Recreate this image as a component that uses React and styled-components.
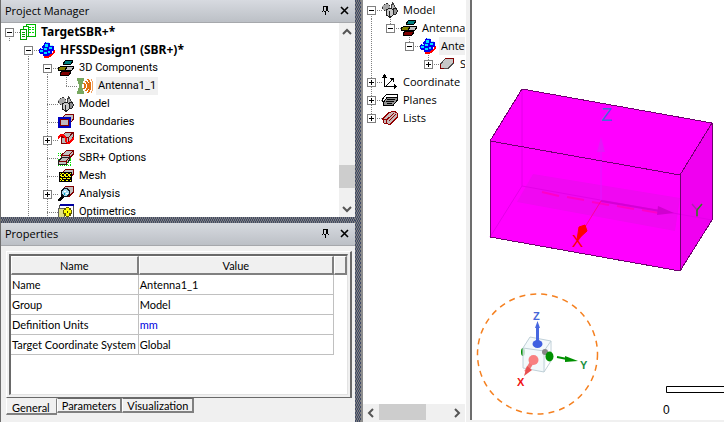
import React from 'react';
import styled, { createGlobalStyle } from 'styled-components';

const GlobalStyle = createGlobalStyle`
  * {
    box-sizing: border-box;
  }

  body {
    margin: 0;
    background: #f0f0f0;
    color: #000;
    font-family: "Open Sans", sans-serif;
    font-size: 11px;
  }

  button {
    font: inherit;
    color: inherit;
    border: 0;
    padding: 0;
    background: none;
  }
`;

const Workspace = styled.div`
  display: grid;
  grid-template-columns: minmax(0, 355fr) 8px minmax(0, 103fr) 4px minmax(0, 254fr);
  grid-template-rows: minmax(0, 1fr);
  height: 100vh;
  overflow: hidden;
`;

const LeftColumn = styled.div`
  display: grid;
  grid-template-rows: minmax(0, 217fr) 6px minmax(0, 199fr);
  border-left: 1px solid #6d6d6d;
  min-width: 0;
`;

const Splitter = styled.div`
  background: conic-gradient(#808080 25%, #404a66 0 50%, #808080 0 75%, #404a66 0) 0 0 / 2px 4px;
  border-right: ${(p) => (p.$vertical ? '2px solid #8e8e8e' : '0')};
`;

const Panel = styled.section`
  display: flex;
  flex-direction: column;
  min-height: 0;
  min-width: 0;
`;

const TitleBar = styled.header`
  display: flex;
  align-items: center;
  flex: none;
  height: 23px;
  padding: 0 5px 1px 4px;
  background: linear-gradient(#d7dae0, #bcc0c6);
  border-bottom: 1px solid #a6a8ac;
`;

const PanelTitle = styled.h2`
  flex: 1;
  margin: 0;
  font-size: 11px;
  font-weight: 400;
`;

const TitleButton = styled.button`
  display: flex;
  width: 11px;
  height: 11px;
  margin-left: 8px;
`;

const TreeArea = styled.div`
  display: flex;
  flex: 1;
  min-height: 0;
  background: #fff;
`;

const Tree = styled.ul`
  flex: 1;
  min-width: 0;
  min-height: 0;
  margin: 0;
  padding: ${(p) => (p.$inset ? '1px 0 0' : '0')};
  list-style: none;
  overflow: hidden;
  background: #fff;
  font-family: ${(p) => (p.$inset ? '"Open Sans"' : 'Roboto')}, sans-serif;
`;

const TreeRow = styled.li`
  display: flex;
  align-items: center;
  height: 18px;
  white-space: nowrap;
`;

const dotsDown = 'repeating-linear-gradient(#808080 0 1px, transparent 1px 2px)';
const dotsAcross = 'repeating-linear-gradient(90deg, #808080 0 1px, transparent 1px 2px)';

const guides = {
  none: 'none',
  line: `${dotsDown} 8px 0 / 1px 100% no-repeat`,
  tee: `${dotsDown} 8px 0 / 1px 100% no-repeat, ${dotsAcross} 8px 9px / 11px 1px no-repeat`,
  end: `${dotsDown} 8px 0 / 1px 9px no-repeat, ${dotsAcross} 8px 9px / 11px 1px no-repeat`,
  start: `${dotsDown} 8px 9px / 1px 9px no-repeat, ${dotsAcross} 8px 9px / 11px 1px no-repeat`,
};

const Guide = styled.span`
  flex: none;
  width: 19px;
  height: 18px;
  padding: 5px 0 0 4px;
  background: ${(p) => guides[p.$type]};
`;

const Expander = styled.button`
  display: block;
  width: 9px;
  height: 9px;
  border: 1px solid #808080;
  background:
    linear-gradient(#000, #000) 1px 3px / 5px 1px no-repeat,
    linear-gradient(#000, #000) 3px 1px / 1px ${(p) => (p.$open ? '0' : '5px')} no-repeat,
    #fff;
`;

const Glyph = styled.svg`
  flex: none;
  display: block;
  width: 16px;
  height: 16px;
`;

const Label = styled.span`
  margin-left: 3px;
  padding: 0 2px 1px;
  line-height: 17px;
  font-family: ${(p) => (p.$bold ? '"Noto Sans", sans-serif' : 'inherit')};
  font-size: ${(p) => (p.$bold ? '12px' : '11px')};
  font-weight: ${(p) => (p.$bold ? 700 : 400)};
  background: ${(p) => (p.$selected ? '#f0f0f0' : 'transparent')};
`;

const Scrollbar = styled.div`
  display: flex;
  flex: none;
  flex-direction: ${(p) => (p.$horizontal ? 'row' : 'column')};
  width: ${(p) => (p.$horizontal ? 'auto' : '16px')};
  height: ${(p) => (p.$horizontal ? '16px' : 'auto')};
  background: #f0f0f0;
`;

const ScrollButton = styled.button`
  display: flex;
  align-items: center;
  justify-content: center;
  flex: none;
  width: 16px;
  height: 17px;
`;

const Track = styled.div`
  display: flex;
  flex: 1;
  flex-direction: inherit;
`;

const Thumb = styled.div`
  flex: ${(p) => p.$size};
  background: #cdcdcd;
`;

const Space = styled.div`
  flex: ${(p) => p.$size};
`;

const PropertiesBody = styled.div`
  display: flex;
  flex: 1;
  flex-direction: column;
  min-height: 0;
  padding: 5px 3px 7px 5px;
  background: #f0f0f0;
`;

const SheetFrame = styled.div`
  display: flex;
  flex: 1;
  min-height: 0;
  padding: 2px;
  border: 1px solid #fff;
  border-right: 2px solid #696969;
  border-bottom: 1px solid #696969;
`;

const Sheet = styled.div`
  flex: 1;
  min-width: 0;
  background: #fff;
  border: 2px solid #696969;
  border-right: 1px solid #e3e3e3;
  border-bottom: 1px solid #e3e3e3;
`;

const PropertyTable = styled.table`
  width: 100%;
  table-layout: fixed;
  border-collapse: separate;
  border-spacing: 0;
  font-family: Lato, sans-serif;
  font-size: 11px;
`;

const HeadCell = styled.th`
  width: ${(p) => p.$width};
  height: 19px;
  padding: 0;
  font-weight: 400;
  background: #f0f0f0;
  border: 1px solid #fff;
  border-right: 2px solid #808080;
  border-bottom: 2px solid #808080;
`;

const Cell = styled.td`
  height: 20px;
  padding: 0 0 0 1px;
  color: ${(p) => (p.$unit ? '#0000e0' : '#000')};
  white-space: nowrap;
  border-right: 1px solid #c0c0c0;
  border-bottom: 1px solid #c0c0c0;
`;

const Tabs = styled.div`
  display: flex;
  align-items: flex-start;
  font-family: Lato, sans-serif;
  font-size: 11px;
`;

const Tab = styled.button`
  height: ${(p) => (p.$active ? '17px' : '15px')};
  padding: ${(p) => (p.$active ? '2px 6px 0 5px' : '0 4px')};
  line-height: 13px;
  background: #f0f0f0;
  border: 1px solid #fff;
  border-top-color: ${(p) => (p.$active ? '#f0f0f0' : '#696969')};
  border-right: ${(p) => (p.$active ? '1px' : '2px')} solid #808080;
  border-bottom: 2px solid #808080;
`;

const ModelPanel = styled(Panel)`
  padding-bottom: 2px;
  border-right: 1px solid #fff;
`;

const Viewport = styled.main`
  min-width: 0;
  margin-bottom: 2px;
  background: #fff;
  border-left: 2px solid #6d6d6d;
  overflow: hidden;
`;

const Scene = styled.svg`
  display: block;
  width: 252px;
  height: 420px;
  font-family: "Liberation Sans", sans-serif;
`;

const drawings = {
  project: (
    <>
      <path d="M6.5 .5H15.5V12.5H6.5Z" fill="#fff" stroke="#00b400" />
      <path d="M9 3h2M12 3h2M9 5h2M12 5h2M9 8h2M12 8h2" stroke="#00e000" />
      <path d="M3.5 2.5H8.5V12.5H3.5Z" fill="#fff" stroke="#00b400" />
      <path d="M.5 5.5H6.5V15.5H.5Z" fill="#fff" stroke="#00a000" />
      <path d="M2 8.500h3M2 10.500h3M2 12.500h3" stroke="#00a000" />
    </>
  ),
  design: (
    <>
      <path d="M5 12h6v-1h3V8h2v3l-3 2-2 2-3 1H5z" fill="#f00" />
      <path d="M6 0h4v1h1v2h3v1h1v4l-1 1h-1v2l-1 1h-1l-1 1-1 1H4v-2H1l-1-1V7l1-1h2V4l2-1V1z" fill="#0000f0" />
      <path d="M6 2h3v3H6zM10 5h3v2h-3zM5 6h3v2H5zM1 8h3v2H1zM5 10h3v2H5zM9 9h2v2H9z" fill="#00e0ff" />
      <path d="M7 0h3v1H7zM11 3h3v1h-3zM2 6h2v1H2z" fill="#a0f0ff" />
    </>
  ),
  components: (
    <>
      <path d="M7.500 .5H14.500V2L12.500 4.500H5.500V3Z" fill="#008080" stroke="#000" />
      <path d="M7.500 6.500H15.500V8L13.500 10.500H7.500Z" fill="#c0c0c0" stroke="#000" />
      <path d="M2.500 6.500H8.500V8L6.500 10.500H.5V8Z" fill="#808000" stroke="#000" />
      <path d="M4 11.500H12.500V13L10.500 15.500H2.500V13Z" fill="#800000" stroke="#000" />
    </>
  ),
  antenna: (
    <>
      <path d="M0 0h7v2L5 7v2l2 5v2H0v-2l2-5V7L0 2z" fill="#78a860" />
      <path d="M7 5q2 3 0 6M9 3q4 5 0 10M11 1q5 7 0 14" fill="none" stroke="#e07010" strokeWidth="2" />
      <path d="M14 1q4 7 0 14" fill="none" stroke="#f0a060" />
    </>
  ),
  model: (
    <>
      <path d="M2 2h5l1 2v5H4L0 7V5z" fill="#a8a8a8" />
      <path d="M2 2h1v1H2zM4 1h2v1H4zM7 3h1v1H7zM0 5h1v2H0zM2 8h1v1H2z" fill="#303030" />
      <path d="M10.500 .5L14.500 8 13 11H8Z" fill="#b8b8b8" stroke="#404040" />
      <path d="M4.500 7.500L8 6l3 1.500V13l-3 2.500L4.500 13Z" fill="#c8c8c8" stroke="#202020" />
      <path d="M7.500 9v6" fill="none" stroke="#202020" />
      <path d="M11.500 6.500h3l1 3-2 3h-2z" fill="#909090" stroke="#202020" />
    </>
  ),
  boundaries: (
    <>
      <path d="M7.500 .5H15.500V5L12.500 9V4H4.500Z" fill="#c0c0c0" stroke="#800000" />
      <rect x="0" y="3" width="13" height="11" fill="#0000c0" />
      <rect x="2" y="5" width="9" height="7" fill="#800000" />
      <rect x="3" y="6" width="7" height="5" fill="#c0b8c0" />
    </>
  ),
  excitations: (
    <>
      <path d="M7.500 .5H15.500V5L10.500 11.500H3.500V5Z" fill="#b8b8b8" stroke="#800000" />
      <path d="M3.500 5.500H10.500L14.500 1M10.500 6v5" fill="none" stroke="#800000" />
      <path d="M0 7Q1 3 4 3T8 8t4 2 4-4" fill="none" stroke="#f00" strokeWidth="2" />
    </>
  ),
  sbr: (
    <>
      <path d="M0 3.500h14M0 5.500h14M0 9.500h14M0 12.500h14M0 15.500h14M12.500 2v14M9.500 2v14" stroke="#00e000" strokeDasharray="1 1" />
      <path d="M8.500 .5H15.500V4L11 8.500H3.500V5Z" fill="#c0c0c0" stroke="#800000" />
      <path d="M3.500 5H11L15 1M11 5v3" fill="none" stroke="#800000" />
      <path d="M4 7.500H11.500V10L8 14.500H.5V11Z" fill="#c0c0c0" stroke="#202020" />
      <path d="M.5 11H8l3-3M8 11v3" fill="none" stroke="#800000" />
    </>
  ),
  mesh: (
    <>
      <path d="M7.500 1.500H15.500V6L12.500 9H4V5Z" fill="#c0c0c0" stroke="#800000" />
      <path d="M1 4h13v10H1z" fill="#000" />
      <path
        d="M2 5h1v1H2zM4 5h2v1H4zM8 5h2v1H8zM12 5h1v1h-1zM3 6h1v1H3zM6 6h1v1H6zM7 6h1v1H7zM10 6h1v1h-1zM11 6h1v1h-1zM2 7h2v1H2zM6 7h2v1H6zM10 7h2v1h-2zM3 8h2v1H3zM5 8h1v1H5zM7 8h3v1H7zM11 8h2v1h-2zM2 10h2v1H2zM6 10h2v1H6zM10 10h2v1h-2zM3 11h1v1H3zM5 10h1v1H5zM9 10h1v1H9zM2 12h1v1H2zM4 12h2v1H4zM8 12h2v1H8zM12 12h1v1h-1z"
        fill="#ff0"
      />
    </>
  ),
  analysis: (
    <>
      <path d="M7.500 .5H15.500V6L11 10.500H4V4Z" fill="#c0c0c0" stroke="#800000" />
      <path d="M5 10L1 15" stroke="#000" strokeWidth="3" />
      <circle cx="7.500" cy="6.500" r="4" fill="#a8dcf0" stroke="#101820" strokeWidth="1.500" />
      <path d="M6 5h2v1H6zM8 7h2v1H8z" fill="#fff" />
      <path d="M6 7h1v2H6z" fill="#00a0c0" />
    </>
  ),
  optimetrics: (
    <>
      <path d="M1.500 1.500H15.500V14.500H1.500Z" fill="#fff" stroke="#505050" />
      <path d="M2 0h14v2H2z" fill="#0000a0" />
      <path d="M.5 4.500H6V14H.5Z" fill="#e0e080" stroke="#606060" />
      <path d="M8 3h3v1h2v2h1v4h-1v2h-2v1H8v-1H6v-2H5V6h1V4h2z" fill="#605800" />
      <path d="M8 4h3v2h2v3h-2v3H8V9H6V6h2z" fill="#ff0" />
      <path d="M9 7h1v2H9z" fill="#404000" />
      <path d="M6 14h4v2H6z" fill="#0000c0" />
    </>
  ),
  sheet: (
    <>
      <path d="M6.500 2.500H14.500V7L9 12.500H1.500V8Z" fill="#c8c8c8" stroke="#505050" />
      <path d="M6 2.500H14.500V7M1.500 8v4.500H5" fill="none" stroke="#800000" />
    </>
  ),
  axes: (
    <>
      <path d="M2 2h1v10h10v1H2z" />
      <path d="M2 0h1v1h1v2h1v1H0V3h1V1h1zM12 10h1v1h1v1h1v1h-1v1h-1v1h-1zM8 4h4v4h-1V6h-1v1H9v1H8v1H7v1H6v1H5v1H4v-1h1v-1h1V9h1V8h1V7h1V5H8z" />
    </>
  ),
  planes: (
    <>
      <path d="M4.500 2.500H15.500V5L12.500 9.500H.5V7Z" fill="#fff" stroke="#000" />
      <path d="M5 5.500H15.500V8L11 13.500H1.500V10Z" fill="#909090" stroke="#000" />
      <path d="M5 7.500H13M4 9.500H12M5 11.500H10" stroke="#000" />
    </>
  ),
  lists: (
    <>
      <path d="M7 2.500L12 1l3.500 2.500V7L8 14.500 2 13 .5 9Z" fill="#c8b8b8" stroke="#900000" />
      <path d="M.5 9l4 1L12 3M4.500 10v3M7 11l7-7" fill="none" stroke="#900000" />
    </>
  ),
};

const projectRows = [
  { guides: ['start'], open: true, icon: 'project', label: 'TargetSBR+*', bold: true },
  { guides: ['none', 'start'], open: true, icon: 'design', label: 'HFSSDesign1 (SBR+)*', bold: true },
  { guides: ['none', 'line', 'start'], open: true, icon: 'components', label: '3D Components' },
  { guides: ['none', 'line', 'line', 'end'], icon: 'antenna', label: 'Antenna1_1', selected: true },
  { guides: ['none', 'line', 'tee'], icon: 'model', label: 'Model' },
  { guides: ['none', 'line', 'tee'], icon: 'boundaries', label: 'Boundaries' },
  { guides: ['none', 'line', 'tee'], open: false, icon: 'excitations', label: 'Excitations' },
  { guides: ['none', 'line', 'tee'], icon: 'sbr', label: 'SBR+ Options' },
  { guides: ['none', 'line', 'tee'], icon: 'mesh', label: 'Mesh' },
  { guides: ['none', 'line', 'tee'], open: false, icon: 'analysis', label: 'Analysis' },
  { guides: ['none', 'line', 'tee'], icon: 'optimetrics', label: 'Optimetrics' },
];

const modelRows = [
  { guides: ['start'], open: true, icon: 'model', label: 'Model' },
  { guides: ['line', 'end'], open: true, icon: 'components', label: 'Antenna' },
  { guides: ['line', 'none', 'end'], open: true, icon: 'design', label: 'Ante', selected: true },
  { guides: ['line', 'none', 'none', 'end'], open: false, icon: 'sheet', label: 'S' },
  { guides: ['tee'], open: false, icon: 'axes', label: 'Coordinate' },
  { guides: ['tee'], open: false, icon: 'planes', label: 'Planes' },
  { guides: ['end'], open: false, icon: 'lists', label: 'Lists' },
];

const properties = [
  { name: 'Name', value: 'Antenna1_1' },
  { name: 'Group', value: 'Model' },
  { name: 'Definition Units', value: 'mm', unit: true },
  { name: 'Target Coordinate System', value: 'Global' },
];

const TreeList = ({ rows, label, inset }) => (
  <Tree aria-label={label} $inset={inset}>
    {rows.map((row) => (
      <TreeRow key={row.label}>
        {row.guides.map((type, i) => (
          <Guide key={i} $type={type}>
            {i === row.guides.length - 1 && row.open !== undefined && (
              <Expander $open={row.open} aria-expanded={row.open} aria-label={`Toggle ${row.label}`} />
            )}
          </Guide>
        ))}
        <Glyph viewBox="0 0 16 16" shapeRendering="crispEdges" aria-hidden="true">
          {drawings[row.icon]}
        </Glyph>
        <Label $bold={row.bold} $selected={row.selected}>{row.label}</Label>
      </TreeRow>
    ))}
  </Tree>
);

const PanelHeader = ({ title }) => (
  <TitleBar>
    <PanelTitle>{title}</PanelTitle>
    <TitleButton aria-label={`Pin ${title}`}>
      <svg width="11" height="11" viewBox="0 0 11 11" shapeRendering="crispEdges">
        <path d="M3 1h5v6H3zM4 2v5h2V2zM2 6h7v1H2zM5 7h1v3H5z" fillRule="evenodd" />
      </svg>
    </TitleButton>
    <TitleButton aria-label={`Close ${title}`}>
      <svg width="11" height="11" viewBox="0 0 11 11">
        <path d="M2 2l7 7M9 2L2 9" stroke="#000" strokeWidth="1.600" />
      </svg>
    </TitleButton>
  </TitleBar>
);

const chevrons = {
  up: 'M1 7l4-4 4 4',
  down: 'M1 3l4 4 4-4',
  left: 'M7 1L3 5l4 4',
  right: 'M3 1l4 4-4 4',
};

const ScrollArrow = ({ to }) => (
  <ScrollButton aria-label={`Scroll ${to}`}>
    <svg width="10" height="10" viewBox="0 0 10 10">
      <path d={chevrons[to]} fill="none" stroke="#555" strokeWidth="2" />
    </svg>
  </ScrollButton>
);

const ModelScene = () => (
  <Scene viewBox="0 0 252 420" role="img" aria-label="Antenna region in the 3D modeler">
    <g transform="translate(-1 0)">
      <path d="M51 89L241 123V220L209 271 19 237V141Z" fill="#ff00ff" />
      <path d="M241 123V220L209 271V175Z" fill="#f000f0" />
      <path d="M62 174L209 198 204 231 46 202Z" fill="#f008f2" />
      <g fill="none" stroke="#e400e8">
        <path d="M51 89V186L19 237M51 186L241 220" />
        <path d="M130 200V146" stroke="#e018ff" />
      </g>
      <path d="M126 152h8l-4-15z" fill="#e318f8" />
      <path d="M71 192l17 4M96 197l17 3M121 202l17 3M146 206l17 3M171 210l17 3" stroke="#ff00c8" strokeWidth="2" />
      <path d="M130 201L189 211" stroke="#d400d4" strokeWidth="2" />
      <path d="M187 206l16 7-17 2z" fill="#d000d0" />
      <path d="M130 201L114 227" stroke="#ff0098" />
      <g fill="none" stroke="#700070" shapeRendering="crispEdges">
        <path d="M51 89L241 123V220L209 271 19 237V141Z" />
        <path d="M19 141L209 175 241 123M209 175V271" />
      </g>
    </g>
    <path d="M107 227l6-2 2 6-10 9z" fill="#f00" stroke="#f00" strokeLinejoin="round" />
    <text x="129" y="121" fontSize="18" fill="#4868d8">Z</text>
    <text x="100" y="247" fontSize="17" fill="#f00">X</text>
    <path d="M220 204l5 6M225 210v7" fill="none" stroke="#b020b0" strokeWidth="1.500" />
    <path d="M225 210l5-6M225 210v6" fill="none" stroke="#308020" strokeWidth="1.500" />

    <circle cx="65.500" cy="354" r="60" fill="none" stroke="#f58020" strokeWidth="1.500" strokeDasharray="6 5" />
    <ellipse cx="51" cy="352" rx="2" ry="4" fill="#009000" />
    <path d="M51 347l7-10 21 4-7 31-21-4z" fill="#f0f8fa" fillOpacity=".8" />
    <path d="M51 348l21 3v21l-21-4zM51 348l7-11 21 4-7 10M79 341v20l-7 11" fill="none" stroke="#c0d0d8" />
    <path d="M65.500 343V326" stroke="#4868e0" strokeWidth="3" />
    <path d="M63 328l2.500-7 2.500 7z" fill="#4868e0" />
    <ellipse cx="65.500" cy="344" rx="5" ry="4" fill="#4060e0" />
    <circle cx="73" cy="352" r="3" fill="#888" />
    <ellipse cx="77.500" cy="356.500" rx="4" ry="5" fill="#009000" />
    <path d="M85 357l10 2" stroke="#009000" strokeWidth="2" />
    <path d="M93 356l13 5-13 1z" fill="#009000" />
    <path d="M60 362l-6 10" stroke="#f07878" strokeWidth="4" />
    <path d="M55 366l5 4-8 6z" fill="#e85050" />
    <circle cx="61.500" cy="360" r="5" fill="#f88080" />
    <g fontSize="11" fontWeight="700">
      <text x="61" y="320" fill="#4868d8">Z</text>
      <text x="108" y="369" fill="#209040">Y</text>
      <text x="45" y="386" fill="#f01010">X</text>
    </g>

    <path d="M253 386.500H194.500V392.500H253" fill="none" stroke="#000" />
    <text x="191" y="414" fontSize="12">0</text>
  </Scene>
);

const App = () => (
  <>
    <GlobalStyle />
    <Workspace>
      <LeftColumn>
        <Panel>
          <PanelHeader title="Project Manager" />
          <TreeArea>
            <TreeList rows={projectRows} label="Project tree" />
            <Scrollbar>
              <ScrollArrow to="up" />
              <Track>
                <Space $size={125} />
                <Thumb $size={23} />
                <Space $size={12} />
              </Track>
              <ScrollArrow to="down" />
            </Scrollbar>
          </TreeArea>
        </Panel>
        <Splitter />
        <Panel>
          <PanelHeader title="Properties" />
          <PropertiesBody>
            <SheetFrame>
              <Sheet>
                <PropertyTable>
                  <thead>
                    <tr>
                      <HeadCell scope="col" $width="38%">Name</HeadCell>
                      <HeadCell scope="col">Value</HeadCell>
                      <HeadCell $width="13px" aria-label="Spacer" />
                    </tr>
                  </thead>
                  <tbody>
                    {properties.map((row) => (
                      <tr key={row.name}>
                        <Cell>{row.name}</Cell>
                        <Cell $unit={row.unit}>{row.value}</Cell>
                      </tr>
                    ))}
                  </tbody>
                </PropertyTable>
              </Sheet>
            </SheetFrame>
            <Tabs role="tablist">
              <Tab role="tab" aria-selected="true" $active>General</Tab>
              <Tab role="tab" aria-selected="false">Parameters</Tab>
              <Tab role="tab" aria-selected="false">Visualization</Tab>
            </Tabs>
          </PropertiesBody>
        </Panel>
      </LeftColumn>
      <Splitter $vertical />
      <ModelPanel>
        <TreeList rows={modelRows} label="Model tree" inset />
        <Scrollbar $horizontal>
          <ScrollArrow to="left" />
          <Track>
            <Thumb $size={47} />
            <Space $size={23} />
          </Track>
          <ScrollArrow to="right" />
        </Scrollbar>
      </ModelPanel>
      <div />
      <Viewport>
        <ModelScene />
      </Viewport>
    </Workspace>
  </>
);

export default App;
